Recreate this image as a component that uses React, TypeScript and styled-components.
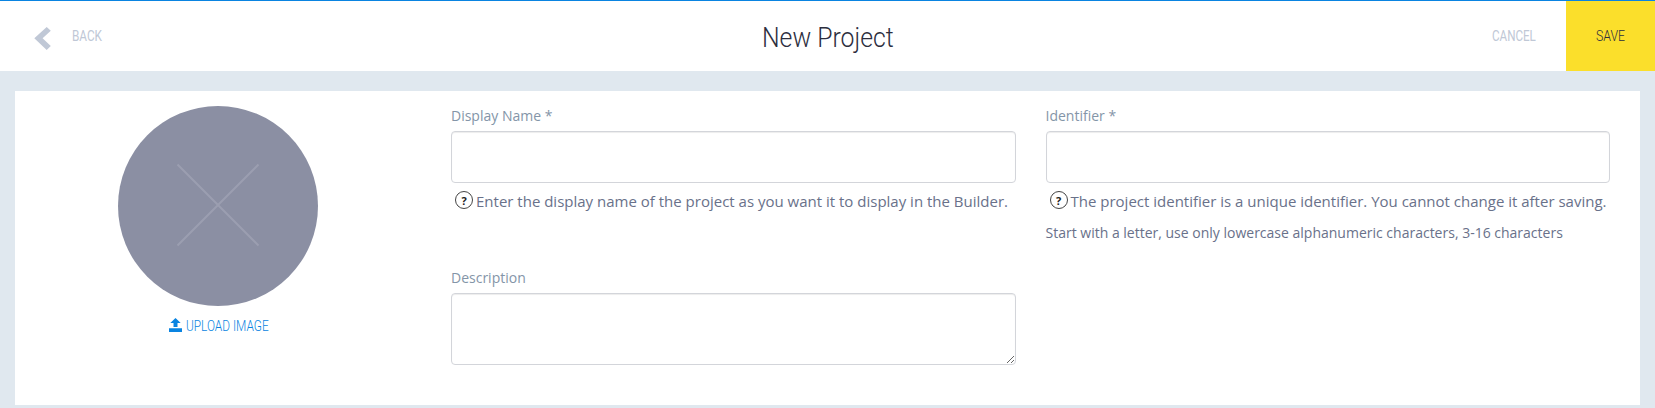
import React from 'react';
import styled, { createGlobalStyle } from 'styled-components';

const GlobalStyle = createGlobalStyle`
  * { box-sizing: border-box; }
  body {
    margin: 0;
    background: #e0e8ef;
    font-family: "Open Sans", sans-serif;
    overflow: hidden;
  }
`;

const Header = styled.header`
  display: grid;
  grid-template-columns: 1fr auto 1fr;
  height: 71px;
  border-top: 1px solid #0a84e1;
  background: #fff;
`;

const BackLink = styled.div`
  display: flex;
  align-items: flex-start;
  gap: 21px;
  padding: 25px 0 0 34px;
  color: #c0c8d6;
  svg { margin-top: 1px; }
`;

const Narrow = styled.span<{ $width: number; $scale: number; $size: number; $weight?: number }>`
  display: block;
  width: ${(p) => p.$width}px;
  font: ${(p) => p.$weight ?? 400} ${(p) => p.$size}px/20px Roboto, sans-serif;
  white-space: nowrap;
  transform: scaleX(${(p) => p.$scale});
  transform-origin: left center;
`;

const Title = styled.h1`
  margin: 0;
  padding: 27px 0 0;
  color: #2c2e3e;
`;

const Actions = styled.div`
  display: flex;
  justify-content: flex-end;
`;

const Action = styled.div<{ $primary?: boolean }>`
  padding: 25px 30px 0;
  height: 70px;
  color: ${(p) => (p.$primary ? '#2c2e3e' : '#c0c8d6')};
  background: ${(p) => (p.$primary ? '#fbdf2b' : 'transparent')};
`;

const Card = styled.main`
  display: grid;
  grid-template-columns: 421px 1fr 1fr;
  height: 314px;
  margin: 20px 15px 0;
  padding-right: 15px;
  background: #fff;
`;

const ImageColumn = styled.section`
  display: flex;
  flex-direction: column;
  align-items: center;
  padding: 15px 15px 0 0;
`;

const Upload = styled.div`
  display: flex;
  gap: 4px;
  margin-top: 10px;
  color: #0a84e1;
  svg { margin-top: 2px; }
`;

const FieldColumn = styled.section`
  padding: 15px 15px 0;
`;

const Label = styled.label<{ $top?: number }>`
  display: block;
  margin-top: ${(p) => p.$top ?? 0}px;
  height: 25px;
  color: #8495a8;
  font-size: 14px;
  line-height: 20px;
`;

const Input = styled.input`
  display: block;
  width: 100%;
  height: 52px;
  border: 1px solid #d3d5da;
  border-radius: 4px;
  box-shadow: inset 0 1px 1px rgba(0, 0, 0, 0.075);
  outline: none;
`;

const TextArea = styled(Input).attrs({ as: 'textarea' })`
  height: 72px;
  resize: vertical;
`;

const Help = styled.div`
  display: flex;
  height: 36px;
  padding: 7px 0 0 4px;
  gap: 3px;
  color: #69718a;
  font-size: 15px;
  line-height: 22px;
  white-space: nowrap;
`;

const HelpMark = styled.span`
  display: block;
  flex: none;
  width: 18px;
  height: 18px;
  margin-top: 1px;
  border: 1px solid #444;
  border-radius: 50%;
  color: #222;
  font-size: 11px;
  font-weight: 700;
  line-height: 17px;
  text-align: center;
`;

const Hint = styled.div`
  color: #69718a;
  font-size: 14px;
  line-height: 28px;
  white-space: nowrap;
`;

export default function App() {
  return (
    <>
      <GlobalStyle />
      <Header>
        <BackLink>
          <svg width="17" height="23" viewBox="0 0 17 23" fill="#c0c8d6">
            <path d="M12.700 0 16.800 3.700 8.600 11.300 16.800 19.100 12.700 23 .300 11.300z" />
          </svg>
          <Narrow $width={30} $scale={0.785} $size={15}>BACK</Narrow>
        </BackLink>
        <Title><Narrow $width={131} $scale={0.886} $size={28} $weight={300}>New Project</Narrow></Title>
        <Actions>
          <Action><Narrow $width={44} $scale={0.775} $size={15}>CANCEL</Narrow></Action>
          <Action $primary><Narrow $width={29} $scale={0.82} $size={15} $weight={300}>SAVE</Narrow></Action>
        </Actions>
      </Header>
      <Card>
        <ImageColumn>
          <svg width="200" height="200" viewBox="0 0 200 200">
            <circle cx="100" cy="100" r="100" fill="#8b8fa3" />
            <path d="M59.500 58.500 140.500 139.500M140.500 58.500 59.500 139.500" stroke="#9b9eb0" strokeWidth="2" />
          </svg>
          <Upload>
            <svg width="13" height="14" viewBox="0 0 13 14" fill="#0a84e1">
              <path d="M6.500 0 11.700 5H8.500V9H4.500V5H1.300zM0 10.300H13V14H0z" />
            </svg>
            <Narrow $width={82} $scale={0.79} $size={15} $weight={300}>UPLOAD IMAGE</Narrow>
          </Upload>
        </ImageColumn>
        <FieldColumn>
          <Label>Display Name *</Label>
          <Input />
          <Help><HelpMark>?</HelpMark>Enter the display name of the project as you want it to display in the Builder.</Help>
          <Label $top={49}>Description</Label>
          <TextArea />
        </FieldColumn>
        <FieldColumn>
          <Label>Identifier *</Label>
          <Input />
          <Help><HelpMark>?</HelpMark>The project identifier is a unique identifier. You cannot change it after saving.</Help>
          <Hint>Start with a letter, use only lowercase alphanumeric characters, 3-16 characters</Hint>
        </FieldColumn>
      </Card>
    </>
  );
}
